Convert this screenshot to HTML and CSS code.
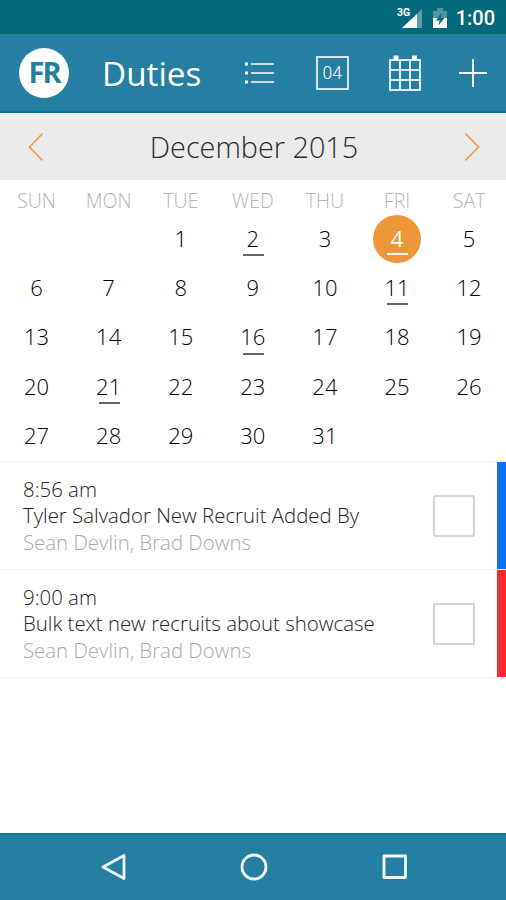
FILE: index.html
```html
<!DOCTYPE html>
<html lang="en">
  <head>
    <meta charset="UTF-8" />
    <meta name="viewport" content="width=device-width, initial-scale=1.0" />
    <title>Duties</title>
    <link rel="stylesheet" href="styles.css">
  </head>
  <body>
    <div id="app">
      <div class="status-bar">
        <svg class="signal" width="28" height="22" viewBox="0 0 28 22">
          <text x="0" y="9" class="signal-text">3G</text>
          <path d="M25 2V21H5z" fill="#5c9fa5" />
          <path d="M20 7V21H5z" fill="#fff" />
        </svg>
        <svg class="battery" width="14" height="21" viewBox="0 0 14 21">
          <path d="M0 3h4V0h6v3h4v8H0z" fill="#4c979e" />
          <path d="M0 10h14v10H0z" fill="#fff" />
          <path d="M8.500 4.500L3 12.500h3.500l-1 5L11.500 10H8z" fill="#04697a" />
        </svg>
        <span class="clock">1:00</span>
      </div>

      <header class="header">
        <div class="logo">FR</div>
        <h1>Duties</h1>
        <nav class="actions">
          <svg width="30" height="24" viewBox="0 0 30 24" fill="none" stroke="#fff" stroke-width="1.6">
            <path d="M6 3h23M6 12h23M6 21h23" />
            <path d="M0 3h3M0 12h3M0 21h3" stroke-width="3" />
          </svg>
          <div class="today">04</div>
          <svg class="grid-icon" width="32" height="36" viewBox="0 0 32 36" fill="none" stroke="#dcecf5" stroke-width="2">
            <path d="M1 5h30v30H1z" />
            <path d="M11 5v30M21 5v30M1 15h30M1 25h30" />
            <path d="M4.500 2.500h5M23 2.500h5" stroke="#fff" stroke-width="4" />
          </svg>
          <svg width="28" height="28" viewBox="0 0 28 28" fill="none" stroke="#fff" stroke-width="1.8">
            <path d="M14 0v28M0 14h28" />
          </svg>
        </nav>
      </header>

      <div class="month">
        <svg width="15" height="28" viewBox="0 0 15 28" fill="none" stroke="#ee9b42" stroke-width="1.6">
          <path d="M14.500 0.500L1.500 14L14.500 27.500" />
        </svg>
        <h2>December 2015</h2>
        <svg width="15" height="28" viewBox="0 0 15 28" fill="none" stroke="#ee9b42" stroke-width="1.6">
          <path d="M0.500 0.500L13.500 14L0.500 27.500" />
        </svg>
      </div>

      <div class="weekdays">
        <span>SUN</span><span>MON</span><span>TUE</span><span>WED</span><span>THU</span><span>FRI</span><span>SAT</span>
      </div>
      <div class="days">
        <span></span>
        <span></span>
        <span>1</span>
        <span class="has-duty">2</span>
        <span>3</span>
        <span class="has-duty selected">4</span>
        <span>5</span>
        <span>6</span>
        <span>7</span>
        <span>8</span>
        <span>9</span>
        <span>10</span>
        <span class="has-duty">11</span>
        <span>12</span>
        <span>13</span>
        <span>14</span>
        <span>15</span>
        <span class="has-duty">16</span>
        <span>17</span>
        <span>18</span>
        <span>19</span>
        <span>20</span>
        <span class="has-duty">21</span>
        <span>22</span>
        <span>23</span>
        <span>24</span>
        <span>25</span>
        <span>26</span>
        <span>27</span>
        <span>28</span>
        <span>29</span>
        <span>30</span>
        <span>31</span>
      </div>

      <div class="duties">
        <div class="duty">
          <div class="duty-text">
            <p>8:56 am</p>
            <p>Tyler Salvador New Recruit Added By</p>
            <p class="people">Sean Devlin, Brad Downs</p>
          </div>
          <div class="checkbox"></div>
          <div class="stripe blue"></div>
        </div>
        <div class="duty">
          <div class="duty-text">
            <p>9:00 am</p>
            <p>Bulk text new recruits about showcase</p>
            <p class="people">Sean Devlin, Brad Downs</p>
          </div>
          <div class="checkbox"></div>
          <div class="stripe red"></div>
        </div>
      </div>

      <div class="nav-bar">
        <svg width="28" height="28" viewBox="0 0 28 28"><path d="M3 14L24 2.500V25.500z" /></svg>
        <svg width="28" height="28" viewBox="0 0 28 28"><circle cx="14" cy="14" r="12" /></svg>
        <svg width="28" height="28" viewBox="0 0 28 28"><path d="M4 3h21.500v21.500H4z" /></svg>
      </div>
    </div>
  </body>
</html>
```

FILE: styles.css
```css
* {
  box-sizing: border-box;
}

body {
  margin: 0;
  background-color: #fff;
  font-family: 'Open Sans', sans-serif;
}

h1,
h2,
p {
  margin: 0;
}

svg {
  display: block;
  flex-shrink: 0;
}

#app {
  display: flex;
  flex-direction: column;
  height: 900px;
  overflow: hidden;
}

.status-bar {
  display: flex;
  justify-content: flex-end;
  align-items: center;
  height: 34px;
  padding-right: 11px;
  padding-top: 2px;
  background-color: #04697a;
  color: #fff;
}

.signal {
  margin-right: 8px;
}

.signal-text {
  fill: #fff;
  font-family: Roboto, sans-serif;
  font-size: 10.5px;
  font-weight: bold;
}

.battery {
  margin-right: 9px;
}

.clock {
  font-family: Roboto, sans-serif;
  font-size: 20px;
  font-weight: 500;
}

.header {
  display: flex;
  align-items: center;
  height: 79px;
  padding: 0 19px;
  background-color: #257fa2;
  border-bottom: 2px solid #08779a;
  color: #fff;
}

.logo {
  width: 50px;
  height: 50px;
  border-radius: 50%;
  background-color: #fff;
  color: #257fa2;
  font-size: 29px;
  font-weight: 700;
  line-height: 48px;
  letter-spacing: -2px;
  text-align: center;
}

.header h1 {
  width: 141px;
  margin-left: 33px;
  font-size: 33.3px;
  font-weight: normal;
  line-height: 48px;
}

.actions {
  display: flex;
  flex: 1;
  justify-content: space-between;
  align-items: center;
  margin-left: 2px;
  padding-top: 1px;
}

.today {
  width: 33px;
  height: 34px;
  margin-left: 3px;
  border: 2px solid #d3e6ef;
  font-family: Roboto, sans-serif;
  font-size: 17.5px;
  font-weight: 300;
  line-height: 31px;
  text-align: center;
}

.grid-icon {
  margin-left: 3px;
}

.month {
  display: flex;
  justify-content: space-between;
  align-items: center;
  height: 67px;
  padding: 0 26px 0 28px;
  background-color: #ebebeb;
}

.month h2 {
  color: #2c2c2c;
  font-size: 28.8px;
  font-weight: 300;
}

.weekdays,
.days {
  display: grid;
  grid-template-columns: repeat(7, 72.1px);
  padding-left: 0.5px;
  text-align: center;
}

.weekdays {
  height: 35px;
  color: #b5b5b5;
  font-size: 19.5px;
  font-weight: 300;
  line-height: 42px;
}

.days {
  grid-auto-rows: 49.2px;
  height: 246px;
  color: #000;
  font-size: 22px;
  font-weight: 300;
  line-height: 47px;
}

.days span {
  position: relative;
}

.has-duty::after {
  content: '';
  position: absolute;
  left: 26px;
  bottom: 8px;
  width: 21px;
  height: 2px;
  background-color: #666;
}

.selected {
  justify-self: center;
  width: 48px;
  height: 48px;
  border-radius: 50%;
  background-color: #ed9739;
  color: #fff;
  font-weight: 400;
}

.selected::after {
  left: 14px;
  background-color: #fff;
}

.duties {
  border-bottom: 2px solid #f8f8f8;
}

.duty {
  display: flex;
  align-items: center;
  height: 108px;
  padding-left: 23px;
  border-top: 1px solid #f0f0f0;
}

.duty-text {
  flex: 1;
  color: #222;
  font-size: 20.4px;
  font-weight: 300;
  line-height: 26.6px;
  white-space: nowrap;
}

.people {
  color: #aaa;
}

.checkbox {
  width: 42px;
  height: 42px;
  margin-right: 22px;
  border: 2px solid #d2d2d2;
  border-radius: 2px;
}

.stripe {
  align-self: stretch;
  width: 9px;
}

.blue {
  background-color: #1170f0;
}

.red {
  background-color: #f22e30;
}

.nav-bar {
  display: flex;
  justify-content: center;
  align-items: center;
  gap: 112px;
  height: 67px;
  margin-top: auto;
  padding-bottom: 2px;
  padding-left: 1px;
  border-top: 2px solid #0d7597;
  background-color: #257fa2;
}

.nav-bar svg {
  fill: none;
  stroke: #f2f9fc;
  stroke-width: 2.8;
  stroke-linejoin: round;
}
```
